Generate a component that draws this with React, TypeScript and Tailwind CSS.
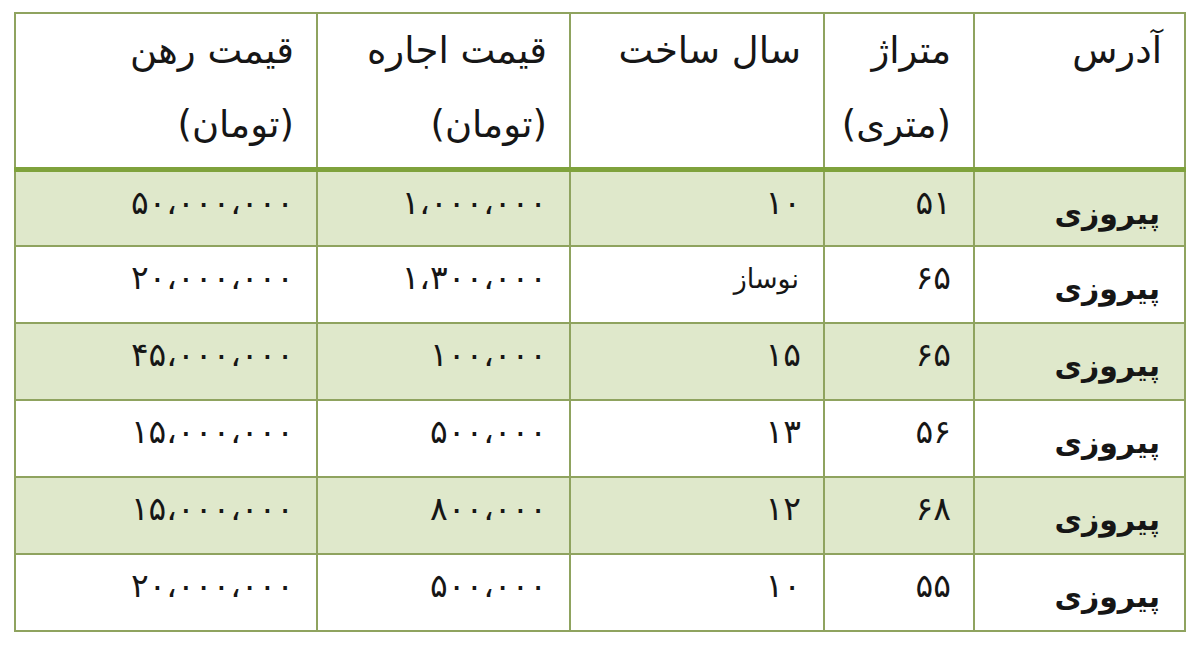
import React from "react";

const rows = [
  ["پیروزی", "۵۱", "۱۰", "۱،۰۰۰،۰۰۰", "۵۰،۰۰۰،۰۰۰"],
  ["پیروزی", "۶۵", "نوساز", "۱،۳۰۰،۰۰۰", "۲۰،۰۰۰،۰۰۰"],
  ["پیروزی", "۶۵", "۱۵", "۱۰۰،۰۰۰", "۴۵،۰۰۰،۰۰۰"],
  ["پیروزی", "۵۶", "۱۳", "۵۰۰،۰۰۰", "۱۵،۰۰۰،۰۰۰"],
  ["پیروزی", "۶۸", "۱۲", "۸۰۰،۰۰۰", "۱۵،۰۰۰،۰۰۰"],
  ["پیروزی", "۵۵", "۱۰", "۵۰۰،۰۰۰", "۲۰،۰۰۰،۰۰۰"],
];

const headers: [string, string | null][] = [
  ["آدرس", null],
  ["متراژ", "(متری)"],
  ["سال ساخت", null],
  ["قیمت اجاره", "(تومان)"],
  ["قیمت رهن", "(تومان)"],
];

const widths = ["w-[211px]", "w-[150px]", "w-[254px]", "w-[253px]", "w-[302px]"];

export default function App() {
  return (
    <div
      className="w-[1200px] h-[652px] bg-white pt-[12px] pl-[14px] text-[#161616]"
      style={{ fontFamily: '"DejaVu Sans", "Noto Sans", sans-serif' }}
    >
      <table dir="rtl" className="border-collapse table-fixed w-[1170px]">
        <thead>
          <tr className="h-[156px]">
            {headers.map(([a, b], i) => (
              <th
                key={i}
                className={`${widths[i]} border-2 border-[#8fa35f] border-b-[5px] border-b-[#7fa23c] align-top text-right pr-[22px] font-normal text-[37px] leading-[74px]`}
              >
                <div>{a}</div>
                {b && <div>{b}</div>}
              </th>
            ))}
          </tr>
        </thead>
        <tbody>
          {rows.map((r, ri) => (
            <tr key={ri} className={`h-[77px] ${ri % 2 === 0 ? "bg-[#dfe8cb]" : "bg-white"}`}>
              {r.map((c, ci) => (
                <td
                  key={ci}
                  className={`border-2 border-[#8fa35f] align-top text-right ${
                    ci === 0
                      ? "font-bold text-[30px] pt-[22px] pr-[24px] leading-[40px]"
                      : c === "نوساز"
                      ? "text-[27px] pt-[12px] pr-[24px] leading-[40px]"
                      : "text-[33px] pt-[11px] pr-[22px] leading-[40px] tracking-[3px]"
                  }`}
                >
                  {c}
                </td>
              ))}
            </tr>
          ))}
        </tbody>
      </table>
    </div>
  );
}
